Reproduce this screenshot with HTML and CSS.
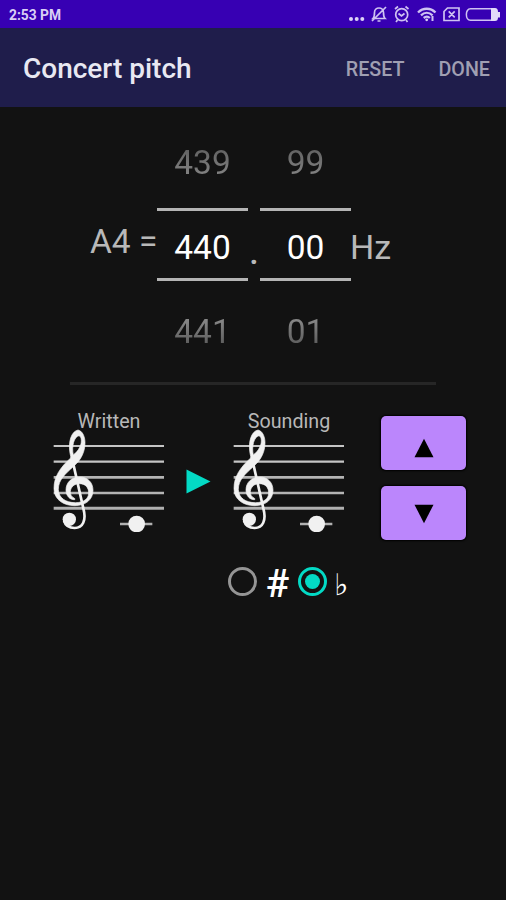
FILE: index.html
```html
<!DOCTYPE html>
<html lang="en">
<head>
    <meta charset="UTF-8">
    <meta name="viewport" content="width=device-width, initial-scale=1.0">
    <title>Concert pitch</title>
    <link rel="stylesheet" href="styles.css">
</head>
<body>
    <!-- Shared treble staff -->
    <svg class="defs" width="0" height="0">
        <symbol id="staff" viewBox="39 84 336 312">
            <path d="M41 138H372" stroke="#c4c4c4" stroke-width="6"/>
            <path d="M41 185H372" stroke="#c4c4c4" stroke-width="7"/>
            <path d="M41 232H372" stroke="#b4b4b4" stroke-width="8"/>
            <path d="M41 279H372" stroke="#b4b4b4" stroke-width="8"/>
            <path d="M41 325H372" stroke="#b0b0b0" stroke-width="9"/>
            <path d="M240 372H337" stroke="#b0b0b0" stroke-width="8"/>
            <circle cx="290" cy="372" r="25" fill="#f1f1f1"/>
            <path fill="#f1f1f1" stroke="#f1f1f1" stroke-width="2" fill-rule="evenodd" d="M114 90C94 94 84 125 90 160L93 173C60 203 42 230 42 265C42 300 72 317 104 317C138 317 159 298 159 271C159 247 142 231 120 231C95 231 78 247 78 270C78 288 90 300 104 299C106 297 104 295 102 294C94 290 91 283 91 275C92 260 104 251 118 251C136 251 146 262 146 279C146 297 130 308 106 308C78 308 55 294 55 268C55 240 75 222 102 198C124 178 135 155 135 128C135 108 126 92 114 90ZM117 107C126 110 126 130 119 142C114 153 106 160 100 165C94 140 102 110 117 107Z"/>
            <path fill="none" stroke="#f1f1f1" stroke-width="8" d="M95 170L130 325C140 362 128 384 104 384C88 384 76 376 72 362"/>
            <circle cx="88" cy="358" r="20" fill="#f1f1f1"/>
        </symbol>
    </svg>

    <div class="status-bar">
        <span class="time">2:53 PM</span>
        <svg class="status-icons" width="156" height="28" viewBox="346 0 156 28" fill="none" stroke="#cfc2f2" stroke-width="1.7">
            <g fill="#dcd2f7" stroke="none">
                <circle cx="351" cy="19" r="2"/>
                <circle cx="356.700" cy="19" r="2"/>
                <circle cx="362.300" cy="19" r="2"/>
            </g>
            <path d="M373 18.500H385C383.500 17 383.500 15 383.500 12.500C383.500 6.500 374.500 6.500 374.500 12.500C374.500 15 374.500 17 373 18.500ZM377.500 21H380.500M372 21L386 7"/>
            <circle cx="401.700" cy="14.700" r="6"/>
            <path d="M398.500 13.500L401.500 16L404.500 13.500M395 9L398 6.500M408.500 9L405.500 6.500M397.500 20L396 22M406 20L407.500 22"/>
            <path d="M418 12.500C423 7.500 430.500 7.500 435.500 12.500M421 15.300C424.500 12 429 12 432.500 15.300M423.700 18C425.700 16.300 428 16.300 429.800 18" stroke-width="2.300"/>
            <circle cx="426.700" cy="19.800" r="1.400" fill="#dcd2f7" stroke="none"/>
            <path d="M432.500 16V21" stroke-width="2"/>
            <path d="M447.500 8H459V20.500H444V11.500ZM448.700 11.300L454.700 17.300M454.700 11.300L448.700 17.300"/>
            <path d="M470.500 8.700H492V20.300H470.500C465 20.300 465 8.700 470.500 8.700Z" stroke-width="1.500"/>
            <path d="M491 8H495Q498 8 498 12H500V17.500H498Q498 21 495 21H491Z" fill="#e2daf9" stroke="none"/>
        </svg>
    </div>

    <header class="app-bar">
        <h1>Concert pitch</h1>
        <button class="action">RESET</button>
        <button class="action">DONE</button>
    </header>

    <main>
        <section class="pitch">
            <span class="note">A4 =</span>
            <div class="picker">
                <span class="prev">439</span>
                <span class="value">440</span>
                <span class="next">441</span>
            </div>
            <span class="dot">.</span>
            <div class="picker">
                <span class="prev">99</span>
                <span class="value">00</span>
                <span class="next">01</span>
            </div>
            <span class="unit">Hz</span>
        </section>

        <hr class="divider">

        <section class="transpose">
            <div class="staff">
                <span>Written</span>
                <svg width="112" height="104"><use href="#staff"/></svg>
            </div>
            <svg class="arrow" width="25" height="25" viewBox="0 0 25 25"><path d="M.5 .5L24.500 12.500L.5 24.500Z" fill="#03dac5"/></svg>
            <div class="staff">
                <span>Sounding</span>
                <svg width="112" height="104"><use href="#staff"/></svg>
            </div>
            <div class="steps">
                <button class="step"><svg width="20" height="20" viewBox="0 0 20 20"><path d="M10 .7L19.500 19.300H.5Z"/></svg></button>
                <button class="step down"><svg width="20" height="20" viewBox="0 0 20 20"><path d="M.5 .7H19.500L10 19.300Z"/></svg></button>
            </div>
        </section>

        <section class="accidentals">
            <span class="radio"></span>
            <span class="sharp">#</span>
            <span class="radio checked"></span>
            <span class="flat">♭</span>
        </section>
    </main>
</body>
</html>
```
FILE: styles.css
```css
* {
    margin: 0;
    padding: 0;
    box-sizing: border-box;
}

body {
    height: 900px;
    background: #121212;
    color: #b8b8b8;
    font-family: Roboto, sans-serif;
    overflow: hidden;
}

svg {
    display: block;
    flex: none;
}

.defs {
    position: absolute;
}

button {
    border: none;
    font-family: inherit;
    cursor: pointer;
}

.status-bar {
    display: flex;
    justify-content: space-between;
    height: 28px;
    padding: 0 4px 0 9px;
    background: #3700b3;
}

.time {
    color: #d9cff5;
    font-size: 13.8px;
    font-weight: 700;
    line-height: 30px;
}

.app-bar {
    display: flex;
    align-items: center;
    height: 79px;
    padding: 3px 16px 0 23px;
    background: #1f1d4b;
}

h1 {
    flex: 1;
    color: #e8e8f2;
    font-size: 28px;
    font-weight: 500;
    line-height: 82px;
}

.action {
    margin-left: 34px;
    background: none;
    color: #a09fb2;
    font-size: 19.7px;
    font-weight: 500;
}

.pitch {
    display: flex;
    height: 275px;
    padding-left: 90px;
    font-size: 34px;
    line-height: 40px;
}

.note {
    width: 67px;
    padding-top: 115px;
    font-size: 33.5px;
    white-space: nowrap;
}

.picker {
    display: flex;
    flex-direction: column;
    width: 91px;
    padding-top: 36px;
    font-size: 33.5px;
    text-align: center;
}

.prev,
.next {
    background: linear-gradient(#5a5a5a, #8c8c8c);
    background-clip: text;
    color: transparent;
}

.next {
    background-image: linear-gradient(#949494, #505050);
    background-clip: text;
}

.value {
    height: 73px;
    margin: 25px 0 31px;
    padding-top: 6px;
    border: solid #b4b4b4;
    border-width: 3px 0;
    color: #fff;
    line-height: 61px;
}

.dot {
    width: 12px;
    padding-top: 125px;
    font-weight: 500;
    text-align: center;
}

.unit {
    margin-left: -1px;
    padding-top: 120px;
}

.divider {
    width: 366px;
    height: 3px;
    margin-left: 70px;
    border: none;
    background: #262626;
}

.transpose {
    display: flex;
    padding: 25px 0 0 53px;
}

.staff {
    width: 112px;
    font-size: 19.7px;
    text-align: center;
}

.staff span {
    display: block;
    height: 18px;
    line-height: 24px;
}

.arrow {
    margin: 59px 22px 0 21px;
}

.steps {
    display: flex;
    flex-direction: column;
    gap: 16px;
    margin: 6px 0 0 36px;
}

.step {
    display: flex;
    justify-content: center;
    width: 85px;
    height: 54px;
    padding-top: 22px;
    border-radius: 5px;
    background: #bb86fc;
    box-shadow: 0 0 2px 1px #000;
}

.down {
    padding-top: 18px;
}

.accidentals {
    display: flex;
    align-items: center;
    height: 50px;
    margin-top: 16px;
    padding-left: 228px;
    color: #fff;
}

.radio {
    display: flex;
    width: 29px;
    height: 29px;
    border: 3px solid #959595;
    border-radius: 50%;
}

.radio.checked {
    border-color: #03dac5;
}

.checked::before {
    content: "";
    width: 15px;
    height: 15px;
    margin: auto;
    border-radius: 50%;
    background: #03dac5;
}

.sharp {
    width: 41px;
    padding-top: 5px;
    font-size: 39px;
    font-weight: 500;
    text-align: center;
}

.flat {
    padding: 7px 0 0 7px;
    font-family: "DejaVu Sans", sans-serif;
    font-size: 30px;
}
```
